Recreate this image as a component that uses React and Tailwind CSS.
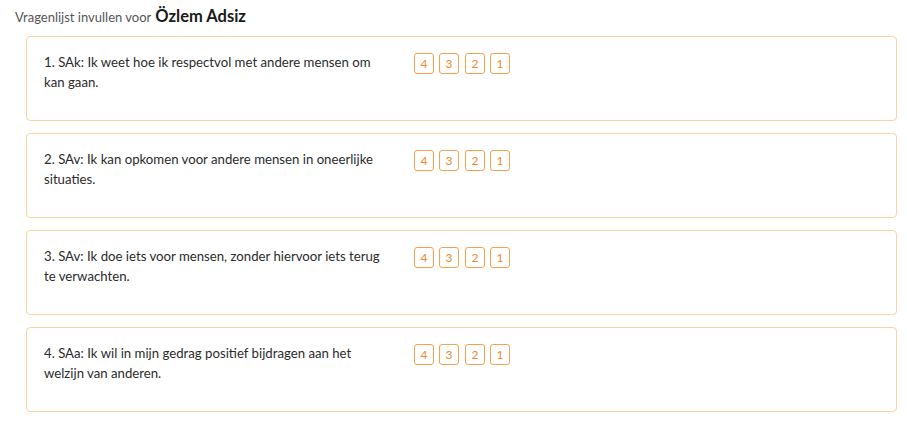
import React from 'react';

const questions = [
    { text: '1. SAk: Ik weet hoe ik respectvol met andere mensen om kan gaan.' },
    { text: '2. SAv: Ik kan opkomen voor andere mensen in oneerlijke situaties.' },
    { text: '3. SAv: Ik doe iets voor mensen, zonder hiervoor iets terug te verwachten.' },
    { text: '4. SAa: Ik wil in mijn gedrag positief bijdragen aan het welzijn van anderen.' },
];

const ScoreBox = ({ value, className = '' }) => (
    <button className={`w-[20px] h-[21px] flex items-center justify-center rounded-[3px] border border-[#f7a14f] text-[12px] text-[#f08a2c] bg-white ${className}`}>
        {value}
    </button>
);

export default function App() {
    return (
        <div className="w-[907px] h-[421px] bg-white overflow-hidden font-['Lato',sans-serif] text-[#2b2b2b]">
            {/* Header */}
            <div className="pl-[15px] pt-[4px] h-[36px] flex items-baseline">
                <span className="text-[13px] text-[#555]">Vragenlijst invullen voor</span>
                <span className="ml-[4px] text-[16.5px] font-bold text-[#1a1a1a]">Özlem Adsiz</span>
            </div>

            {/* Questions */}
            <div className="pl-[26px] pr-[10px] flex flex-col gap-[12px]">
                {questions.map((q, i) => (
                    <div key={i} className="h-[85px] border border-[#fdd3a2] rounded-[4px] pl-[17px] pt-[15px] flex">
                        <p className="w-[338px] text-[13.2px] leading-[20px]">{q.text}</p>
                        <div className="ml-[32px] mt-[1px] flex">
                            <ScoreBox value="4" />
                            <ScoreBox value="3" className="ml-[5px]" />
                            <ScoreBox value="2" className="ml-[6px]" />
                            <ScoreBox value="1" className="ml-[5px]" />
                        </div>
                    </div>
                ))}
            </div>
        </div>
    );
}
